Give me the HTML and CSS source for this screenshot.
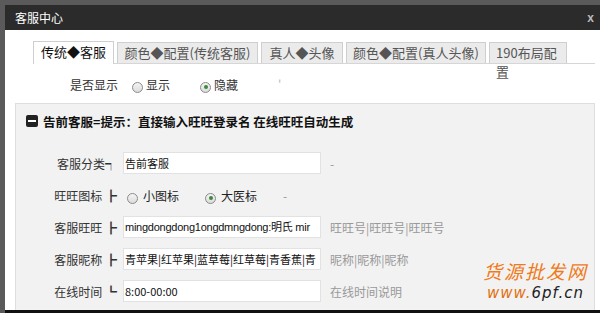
FILE: index.html
```html
<!DOCTYPE html>
<html lang="zh">
<head>
<meta charset="utf-8">
<title>客服中心</title>
<link rel="stylesheet" href="styles.css">
</head>
<body>
<div class="window">
  <div class="titlebar">
    <span class="title">客服中心</span>
    <span class="close">x</span>
  </div>
  <div class="content">
    <div class="tabs">
      <div class="tab active t1">传统◆客服</div>
      <div class="tab t2">颜色◆配置(传统客服)</div>
      <div class="tab t3">真人◆头像</div>
      <div class="tab t4">颜色◆配置(真人头像)</div>
      <div class="tab t5">190布局配置</div>
    </div>
    <div class="showrow">
      <span class="showlabel">是否显示</span>
      <label class="radio"><span class="dot"></span>显示</label>
      <label class="radio"><span class="dot on"></span>隐藏</label>
      <span class="tick">'</span>
    </div>
    <div class="section">
      <div class="sechead">
        <span class="minus"></span>
        <span>告前客服=提示：直接输入旺旺登录名 在线旺旺自动生成</span>
      </div>
      <div class="rows">
        <div class="row">
          <span class="label">客服分类┑</span>
          <div class="input">告前客服</div>
          <span class="hint">-</span>
        </div>
        <div class="row radiorow">
          <span class="label">旺旺图标 ┣</span>
          <label class="radio r1"><span class="dot"></span>小图标</label>
          <label class="radio r2"><span class="dot on"></span>大医标</label>
          <span class="hint dash">-</span>
        </div>
        <div class="row">
          <span class="label">客服旺旺 ┣</span>
          <div class="input tight">mingdongdong1ongdmngdong:明氏 mir</div>
          <span class="hint">旺旺号|旺旺号|旺旺号</span>
        </div>
        <div class="row">
          <span class="label">客服昵称 ┣</span>
          <div class="input">青苹果|红苹果|蓝草莓|红草莓|青香蕉|青</div>
          <span class="hint">昵称|昵称|昵称</span>
        </div>
        <div class="row">
          <span class="label">在线时间 ┗</span>
          <div class="input">8:00-00:00</div>
          <span class="hint">在线时间说明</span>
        </div>
      </div>
      <div class="watermark">
        <div class="wm1">货源批发网</div>
        <div class="wm2">www.<span class="wm3">6pf.cn</span></div>
      </div>
    </div>
  </div>
</div>
</body>
</html>
```
FILE: styles.css
```css
html, body {
  margin: 0;
  padding: 0;
}
body {
  width: 600px;
  height: 313px;
  background: #5a5a5a;
  overflow: hidden;
  font-family: "Noto Sans CJK SC", "Noto Sans", sans-serif;
  font-size: 12px;
  color: #222;
}
.window {
  margin: 5px 0 0 5px;
  width: 595px;
  height: 305px;
  background: #fff;
  border-bottom: 3px solid #111;
  display: flex;
  flex-direction: column;
}
.titlebar {
  height: 25px;
  background: #2b2b2b;
  display: flex;
  align-items: center;
  justify-content: space-between;
  padding: 0 6px 0 10px;
  flex: none;
}
.title {
  color: #fff;
  font-size: 12px;
}
.close {
  color: #bbb;
  font-family: "Liberation Sans", sans-serif;
  font-size: 12px;
  font-weight: bold;
}
.content {
  flex: 1;
  position: relative;
  overflow: hidden;
}
.tabs {
  display: flex;
  gap: 3px;
  margin: 11px 0 0 28px;
  width: 562px;
  height: 22px;
  border-bottom: 1px solid #d6d6d6;
  align-items: flex-end;
}
.tab {
  height: 21px;
  box-sizing: border-box;
  border: 1px solid #cfcfcf;
  border-bottom: none;
  background: #ebebeb;
  color: #555;
  font-size: 13px;
  line-height: 20px;
  text-align: center;
  flex: none;
  overflow: visible;
}
.tab.active {
  background: #fff;
  color: #111;
  height: 23px;
  margin-bottom: -1px;
}
.t1 { width: 81px; }
.t2 { width: 141px; }
.t3 { width: 82px; }
.t4 { width: 140px; }
.t5 { width: 78px; padding: 0 6px; word-break: break-all; line-height: 19px; text-align: left; }
.showrow {
  display: flex;
  align-items: center;
  height: 20px;
  margin: 10px 0 0 65px;
  font-size: 12px;
  color: #333;
}
.showlabel {
  margin-right: 14px;
}
.radio {
  display: flex;
  align-items: center;
  margin-right: 30px;
}
.dot {
  width: 11px;
  height: 11px;
  border: 1px solid #8a8a8a;
  border-radius: 50%;
  background: linear-gradient(#f4f4f4, #dcdcdc);
  margin: 6px 3px 0 0;
  box-sizing: border-box;
  position: relative;
}
.dot.on::after {
  content: "";
  position: absolute;
  left: 2.5px;
  top: 2.5px;
  width: 4px;
  height: 4px;
  border-radius: 50%;
  background: #3a8a3a;
}
.tick {
  color: #bbb;
  margin-left: 10px;
}
.section {
  margin: 9px 5px 0 10px;
  background: #f2f2f2;
  border: 1px solid #dedede;
  border-bottom: none;
  height: 220px;
  position: relative;
}
.sechead {
  display: flex;
  align-items: center;
  gap: 5px;
  height: 34px;
  padding-left: 10px;
  font-weight: bold;
  font-size: 12.5px;
  color: #111;
}
.minus {
  width: 12px;
  height: 12px;
  background: #222;
  border-radius: 2px;
  position: relative;
}
.minus::after {
  content: "";
  position: absolute;
  left: 2px;
  right: 2px;
  top: 5px;
  height: 2px;
  background: #fff;
}
.rows {
  display: flex;
  flex-direction: column;
  gap: 10px;
  margin-top: 14px;
}
.row {
  display: flex;
  align-items: center;
  height: 22px;
}
.label {
  width: 101px;
  text-align: right;
  color: #333;
  margin-right: 6px;
  white-space: nowrap;
}
.input {
  width: 198px;
  height: 22px;
  box-sizing: border-box;
  background: #fff;
  border: 1px solid #e2e2e2;
  padding: 0 1px;
  line-height: 20px;
  font-size: 11px;
  color: #111;
  white-space: nowrap;
  overflow: hidden;
}
.input.tight {
  font-family: "Liberation Sans", "Noto Sans CJK SC", sans-serif;
  letter-spacing: -0.25px;
}
.hint {
  margin-left: 9px;
  color: #999;
}
.radiorow .radio {
  margin-right: 0;
}
.radiorow .dot {
  margin-right: 5px;
}
.r1 { margin-left: 4px; }
.r2 { margin-left: 26px; }
.hint.dash { margin-left: 26px; }
.watermark {
  position: absolute;
  right: 6px;
  bottom: 21px;
  text-align: center;
}
.wm1 {
  color: #f07a1a;
  font-size: 19px;
  line-height: 24px;
  letter-spacing: 2px;
  font-family: "Noto Sans CJK SC", sans-serif;
  font-style: italic;
}
.wm2 {
  color: #e07010;
  font-size: 15px;
  line-height: 20px;
  font-style: italic;
  font-family: "DejaVu Sans", sans-serif;
  letter-spacing: 1px;
}
.wm3 {
  color: #222;
}
```
